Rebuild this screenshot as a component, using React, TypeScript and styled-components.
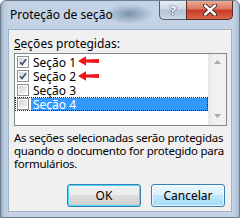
import styled, { createGlobalStyle } from "styled-components";

const Global = createGlobalStyle`
    html, body {
        margin: 0;
        padding: 0;
        background: #ffffff;
    }
    #root {
        width: 240px;
        height: 218px;
    }
`;

const Window = styled.div`
    position: relative;
    width: 240px;
    height: 218px;
    box-sizing: border-box;
    display: flex;
    flex-direction: column;
    overflow: hidden;
    border: 1px solid #6d7c8e;
    border-radius: 6px 6px 0 0;
    font-family: "Segoe UI", "Noto Sans", sans-serif;
    font-size: 12px;
    color: #000;
    background:
        radial-gradient(ellipse 24px 10px at 128px 13px, rgba(105, 130, 156, 0.8), rgba(105, 130, 156, 0) 100%),
        linear-gradient(to right, #93a7bd 0px, #b9cade 3px, #c3d3e5 8px, #c3d3e5 232px, #b5c6da 236px, #8fa3b9 240px);
`;

const TitleBar = styled.div`
    height: 28px;
    display: flex;
    align-items: flex-start;
    padding-left: 9px;
    flex-shrink: 0;
`;

const Title = styled.div`
    margin-top: 6px;
    line-height: 16px;
    color: #000;
`;

const Caption = styled.div`
    margin-left: auto;
    margin-right: 6px;
    display: flex;
    height: 19px;
`;

const HelpButton = styled.div`
    width: 27px;
    box-sizing: border-box;
    border: 1px solid #4f5d6e;
    border-top: none;
    border-right: none;
    border-radius: 0 0 0 5px;
    background: linear-gradient(to bottom, #e4ebf3 0%, #ccd8e5 45%, #b3c3d5 50%, #c8d6e4 100%);
    display: flex;
    align-items: center;
    justify-content: center;
    font-weight: bold;
    font-size: 13px;
    color: #ffffff;
    text-shadow: 0 0 1px #3c4654, 0 0 1px #3c4654, 0 0 1px #3c4654;
`;

const CloseButton = styled.div`
    width: 47px;
    box-sizing: border-box;
    border: 1px solid #5a2a22;
    border-top: none;
    border-radius: 0 0 5px 0;
    background: linear-gradient(to bottom, #eaa994 0%, #da7761 45%, #c73b22 50%, #d9664c 100%);
    display: flex;
    align-items: center;
    justify-content: center;
`;

const Client = styled.div`
    flex: 1;
    margin: 0 7px 5px 7px;
    border: 1px solid #9fb2c8;
    background: #f0f0f0;
    padding: 5px 5px 0 5px;
    display: flex;
    flex-direction: column;
`;

const Label = styled.div`
    margin-top: 1px;
    line-height: 16px;

    u {
        text-decoration: underline;
        text-underline-offset: 1px;
    }
`;

const ListBox = styled.div`
    margin-top: 1px;
    width: 213px;
    height: 73px;
    box-sizing: border-box;
    border: 1px solid #828790;
    background: #ffffff;
    display: flex;
`;

const Items = styled.div`
    flex: 1;
    padding-top: 1px;
`;

const Row = styled.div<{ $focused?: boolean }>`
    height: 14px;
    display: flex;
    align-items: center;
    padding-left: 2px;
    box-sizing: border-box;
    outline: ${p => (p.$focused ? "1px dotted #222" : "none")};
    outline-offset: -1px;
`;

const Box = styled.div`
    width: 12px;
    height: 12px;
    box-sizing: border-box;
    border: 1px solid #8e8f8f;
    background: #fdfdfd;
    display: flex;
    align-items: center;
    justify-content: center;
    flex-shrink: 0;
    position: relative;

    &::before {
        content: "";
        position: absolute;
        inset: 1px;
        background: linear-gradient(135deg, #cfd3d8 0%, #e6e8eb 55%, #f7f7f7 100%);
    }

    svg {
        position: relative;
    }
`;

const ItemText = styled.span<{ $selected?: boolean }>`
    margin-left: 2px;
    padding-left: 2px;
    flex: 1;
    line-height: 13px;
    height: 13px;
    background: ${p => (p.$selected ? "#3399ff" : "transparent")};
    color: ${p => (p.$selected ? "#ffffff" : "#000000")};
`;

const ScrollBar = styled.div`
    width: 18px;
    display: flex;
    flex-direction: column;
    justify-content: space-between;
    align-items: center;
    background: linear-gradient(to right, #e3e3e3 0px, #efefef 3px, #f2f2f2 100%);
    border-left: 1px solid #e9e9e9;
    padding: 6px 0 7px 0;
    box-sizing: border-box;
`;

const Description = styled.div`
    margin-top: 5px;
    line-height: 13px;
    font-size: 11.5px;
    white-space: nowrap;
    letter-spacing: -0.25px;
`;

const ButtonRow = styled.div`
    margin-top: auto;
    margin-bottom: 4px;
    padding-right: 1px;
    display: flex;
    justify-content: flex-end;
    gap: 10px;
`;

const Button = styled.div<{ $hot?: boolean; $default?: boolean }>`
    width: 74px;
    height: 23px;
    box-sizing: border-box;
    border: 1px solid ${p => (p.$hot || p.$default ? "#3c7fb1" : "#707070")};
    border-radius: 3px;
    display: flex;
    align-items: center;
    justify-content: center;
    color: #000;
    background: ${p =>
        p.$hot
            ? "linear-gradient(to bottom, #eaf6fd 0%, #d9f0fc 50%, #bee6fd 50%, #a7d9f5 100%)"
            : "linear-gradient(to bottom, #f2f2f2 0%, #ebebeb 50%, #dddddd 50%, #cfcfcf 100%)"};
    box-shadow: ${p => (p.$default ? "inset 0 0 0 1px #48d8fb" : "inset 0 0 0 1px rgba(255,255,255,0.7)")};
`;

const Arrow = styled.svg<{ $top: number }>`
    position: absolute;
    left: 77px;
    top: ${p => p.$top}px;
`;

const sections = [
    { name: "Seção 1", checked: true },
    { name: "Seção 2", checked: true },
    { name: "Seção 3", checked: false },
    { name: "Seção 4", checked: false },
];

function Check() {
    return (
        <svg width="8" height="8" viewBox="0 0 8 8">
            <path d="M1 4.2 L3.1 6.4 L7 1.2" fill="none" stroke="#3f4f72" strokeWidth="1.6" />
        </svg>
    );
}

function RedArrow({ top }: { top: number }) {
    return (
        <Arrow $top={top} width="21" height="10" viewBox="0 0 21 10">
            <path d="M0 5 L8 0.3 L8 3.4 L21 3 L21 7 L8 6.6 L8 9.7 Z" fill="#f0141b" />
        </Arrow>
    );
}

function App() {
    return (
        <>
            <Global />
            <Window>
                <TitleBar>
                    <Title>Proteção de seção</Title>
                    <Caption>
                        <HelpButton>?</HelpButton>
                        <CloseButton>
                            <svg width="14" height="12" viewBox="0 0 14 12">
                                <path
                                    d="M2 1.5 L12 10.5 M12 1.5 L2 10.5"
                                    stroke="#3b1a14"
                                    strokeWidth="4.2"
                                    strokeLinecap="round"
                                />
                                <path
                                    d="M2 1.5 L12 10.5 M12 1.5 L2 10.5"
                                    stroke="#ffffff"
                                    strokeWidth="2.4"
                                    strokeLinecap="round"
                                />
                            </svg>
                        </CloseButton>
                    </Caption>
                </TitleBar>
                <Client>
                    <Label>
                        <u>S</u>eções protegidas:
                    </Label>
                    <ListBox>
                        <Items>
                            {sections.map((s, i) => (
                                <Row key={s.name} $focused={i === 3}>
                                    <Box>{s.checked && <Check />}</Box>
                                    <ItemText $selected={i === 3}>{s.name}</ItemText>
                                </Row>
                            ))}
                        </Items>
                        <ScrollBar>
                            <svg width="7" height="4" viewBox="0 0 7 4">
                                <path d="M0 4 L3.5 0 L7 4 Z" fill="#a3a9b0" />
                            </svg>
                            <svg width="7" height="4" viewBox="0 0 7 4">
                                <path d="M0 0 L3.5 4 L7 0 Z" fill="#a3a9b0" />
                            </svg>
                        </ScrollBar>
                    </ListBox>
                    <Description>
                        As seções selecionadas serão protegidas
                        <br />
                        quando o documento for protegido para
                        <br />
                        formulários.
                    </Description>
                    <ButtonRow>
                        <Button $default>OK</Button>
                        <Button $hot>Cancelar</Button>
                    </ButtonRow>
                </Client>
                <RedArrow top={55} />
                <RedArrow top={70} />
            </Window>
        </>
    );
}

export default App;
